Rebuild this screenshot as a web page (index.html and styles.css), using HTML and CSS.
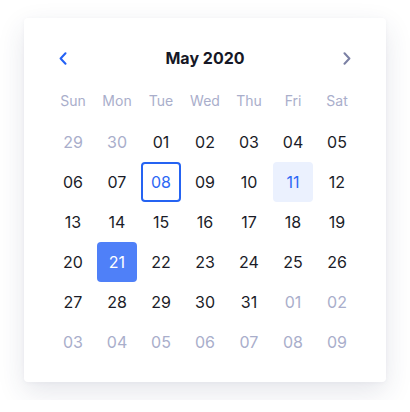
FILE: index.html
```html
<!DOCTYPE html>
<html>
<head>
<meta charset="utf-8">
<link rel="stylesheet" href="styles.css">
</head>
<body>
<div class="card">
  <div class="header">
    <button class="nav nav-prev" aria-label="Previous month">
      <svg width="8" height="13" viewBox="0 0 8 13"><path d="M6.5 1.2 L1.6 6.5 L6.5 11.8" fill="none" stroke="currentColor" stroke-width="2" stroke-linecap="round" stroke-linejoin="round"/></svg>
    </button>
    <div class="title">May 2020</div>
    <button class="nav nav-next" aria-label="Next month">
      <svg width="8" height="13" viewBox="0 0 8 13"><path d="M1.5 1.2 L6.4 6.5 L1.5 11.8" fill="none" stroke="currentColor" stroke-width="2" stroke-linecap="round" stroke-linejoin="round"/></svg>
    </button>
  </div>
  <div class="grid weekdays">
    <div>Sun</div><div>Mon</div><div>Tue</div><div>Wed</div><div>Thu</div><div>Fri</div><div>Sat</div>
  </div>
  <div class="grid days">
    <div class="day muted">29</div><div class="day muted">30</div><div class="day">01</div><div class="day">02</div><div class="day">03</div><div class="day">04</div><div class="day">05</div>
    <div class="day">06</div><div class="day">07</div><div class="day today">08</div><div class="day">09</div><div class="day">10</div><div class="day hover">11</div><div class="day">12</div>
    <div class="day">13</div><div class="day">14</div><div class="day">15</div><div class="day">16</div><div class="day">17</div><div class="day">18</div><div class="day">19</div>
    <div class="day">20</div><div class="day selected">21</div><div class="day">22</div><div class="day">23</div><div class="day">24</div><div class="day">25</div><div class="day">26</div>
    <div class="day">27</div><div class="day">28</div><div class="day">29</div><div class="day">30</div><div class="day">31</div><div class="day muted">01</div><div class="day muted">02</div>
    <div class="day muted">03</div><div class="day muted">04</div><div class="day muted">05</div><div class="day muted">06</div><div class="day muted">07</div><div class="day muted">08</div><div class="day muted">09</div>
  </div>
</div>
</body>
</html>
```
FILE: styles.css
```css
html, body {
  margin: 0;
  padding: 0;
  background: #ffffff;
}
body {
  font-family: Inter, "Noto Sans", sans-serif;
  padding: 18px 24px;
}
.card {
  width: 362px;
  box-sizing: border-box;
  padding: 20px 29px;
  background: #ffffff;
  border-radius: 4px;
  box-shadow: 0 10px 28px rgba(40, 48, 90, 0.12), 0 1px 4px rgba(40, 48, 90, 0.04);
}
.header {
  height: 40px;
  display: flex;
  align-items: center;
  justify-content: space-between;
}
.nav {
  width: 20px;
  height: 20px;
  padding: 0;
  border: 0;
  background: none;
  display: flex;
  align-items: center;
  justify-content: center;
}
.nav-prev { color: #2361f5; }
.nav-next { color: #7b80a4; }
.title {
  font-size: 16px;
  font-weight: 700;
  color: #161826;
}
.grid {
  display: grid;
  grid-template-columns: repeat(7, 40px);
  column-gap: 4px;
}
.weekdays {
  margin-top: 2px;
  grid-auto-rows: 40px;
  font-size: 14px;
  color: #a9aecb;
}
.weekdays div {
  display: flex;
  align-items: center;
  justify-content: center;
}
.days {
  margin-top: 2px;
  grid-auto-rows: 40px;
}
.day {
  display: flex;
  align-items: center;
  justify-content: center;
  font-size: 16px;
  color: #1b1c28;
  border-radius: 4px;
  box-sizing: border-box;
}
.day.muted { color: #a9aecb; }
.day.today {
  border: 2px solid #2563f2;
  color: #2d68f5;
}
.day.hover {
  background: #ebf1fe;
  color: #2d68f5;
}
.day.selected {
  background: #4f80f8;
  color: #ffffff;
}
```
